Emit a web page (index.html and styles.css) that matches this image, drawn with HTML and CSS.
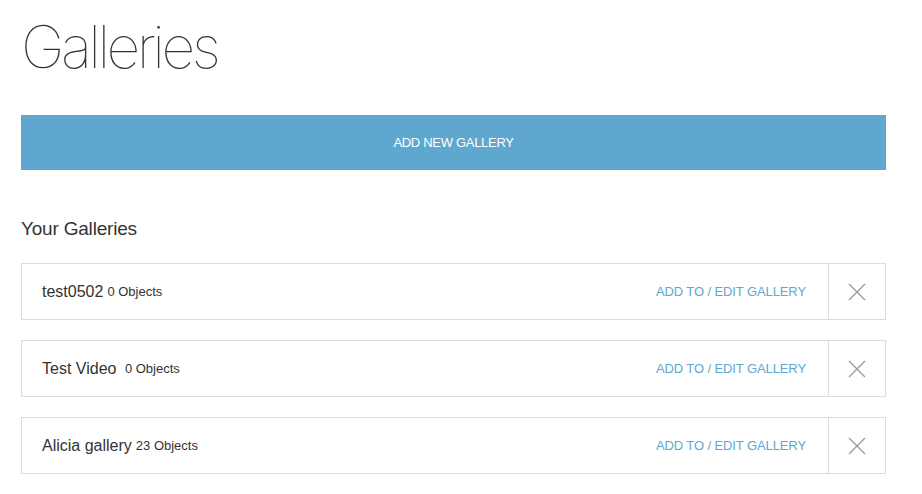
FILE: index.html
```html
<!DOCTYPE html>
<html>
<head>
<meta charset="utf-8">
<link rel="stylesheet" href="styles.css">
</head>
<body>
<main class="page">
  <h1 class="title">Galleries</h1>
  <button class="add-btn">ADD NEW GALLERY</button>
  <h2 class="subtitle">Your Galleries</h2>
  <ul class="list">
    <li class="row">
      <div class="main">
        <span class="name">test0502</span>
        <span class="count">0 Objects</span>
        <a class="edit">ADD TO / EDIT GALLERY</a>
      </div>
      <div class="close"><svg width="18" height="18" viewBox="0 0 18 18"><path d="M1 1L17 17M17 1L1 17" stroke="#9a9a9a" stroke-width="1.3" fill="none"/></svg></div>
    </li>
    <li class="row">
      <div class="main">
        <span class="name">Test Video&nbsp;</span>
        <span class="count">0 Objects</span>
        <a class="edit">ADD TO / EDIT GALLERY</a>
      </div>
      <div class="close"><svg width="18" height="18" viewBox="0 0 18 18"><path d="M1 1L17 17M17 1L1 17" stroke="#9a9a9a" stroke-width="1.3" fill="none"/></svg></div>
    </li>
    <li class="row">
      <div class="main">
        <span class="name">Alicia gallery</span>
        <span class="count">23 Objects</span>
        <a class="edit">ADD TO / EDIT GALLERY</a>
      </div>
      <div class="close"><svg width="18" height="18" viewBox="0 0 18 18"><path d="M1 1L17 17M17 1L1 17" stroke="#9a9a9a" stroke-width="1.3" fill="none"/></svg></div>
    </li>
  </ul>
</main>
</body>
</html>
```
FILE: styles.css
```css
* { box-sizing: border-box; }
body {
  margin: 0;
  background: #fff;
  font-family: "Liberation Sans", Arial, sans-serif;
  color: #333;
}
.page {
  width: 865px;
  margin-left: 21px;
  padding-top: 12px;
}
.title {
  margin: 0;
  font-family: "Inter", "Liberation Sans", sans-serif;
  font-weight: 100;
  font-size: 59px;
  line-height: 70px;
  letter-spacing: -3.6px;
  color: #333;
}
.add-btn {
  display: block;
  width: 100%;
  height: 55px;
  margin-top: 33px;
  border: 0;
  background: #5ea8cf;
  color: #fff;
  font-family: "Liberation Sans", Arial, sans-serif;
  font-size: 13px;
  letter-spacing: -0.3px;
  padding: 0;
}
.subtitle {
  margin: 47px 0 0;
  font-weight: normal;
  font-size: 19px;
  line-height: 24px;
  color: #333;
  letter-spacing: -0.2px;
}
.list {
  list-style: none;
  margin: 22px 0 0;
  padding: 0;
  display: flex;
  flex-direction: column;
  gap: 20px;
}
.row {
  display: flex;
  height: 57px;
  border: 1px solid #dcdcdc;
}
.main {
  flex: 1;
  display: flex;
  align-items: center;
  padding: 0 22px 0 20px;
  border-right: 1px solid #dcdcdc;
}
.name {
  font-size: 16px;
  color: #333;
  margin-right: 4px;
}
.count {
  font-size: 13px;
  color: #333;
}
.edit {
  margin-left: auto;
  font-size: 13px;
  color: #5ea8cf;
  letter-spacing: -0.1px;
}
.close {
  width: 56px;
  display: flex;
  align-items: center;
  justify-content: center;
}
```
